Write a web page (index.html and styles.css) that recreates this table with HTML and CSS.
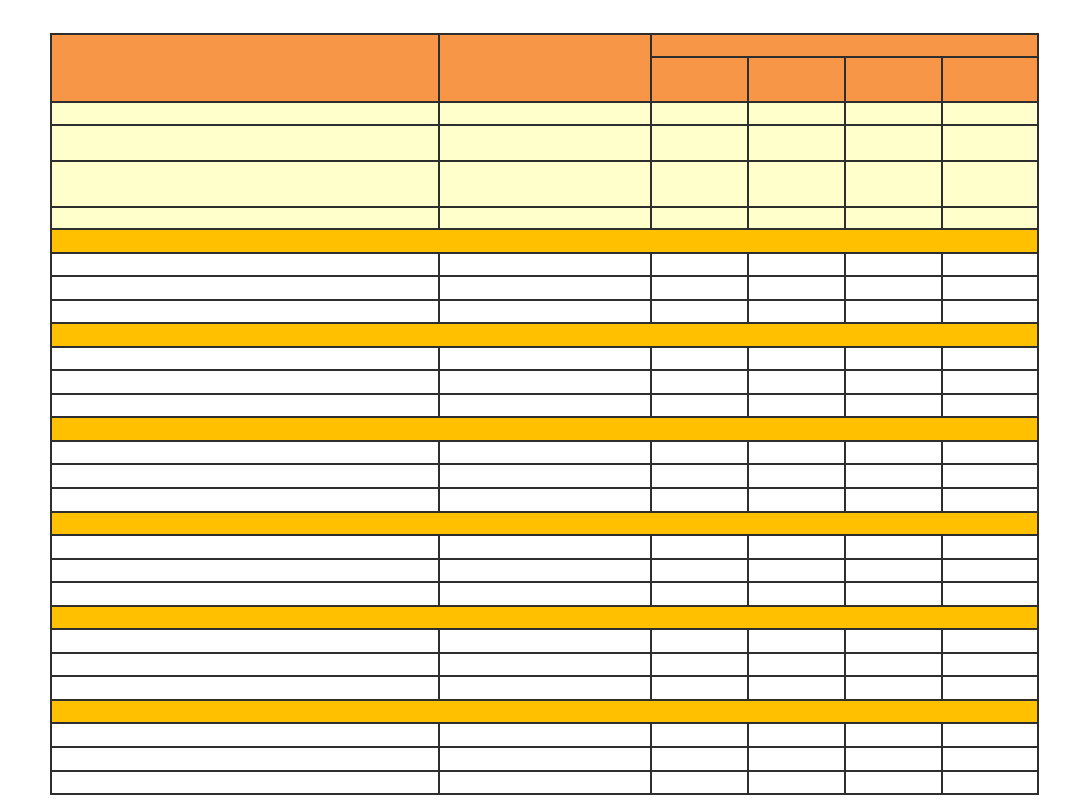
FILE: index.html
```html
<!DOCTYPE html>
<html>
<head>
<meta charset="utf-8">
<link rel="stylesheet" href="styles.css">
</head>
<body>
<div class="sheet">
  <div class="cell head span-rows"></div>
  <div class="cell head span-rows"></div>
  <div class="cell head span-cols4"></div>
  <div class="cell head"></div><div class="cell head"></div><div class="cell head"></div><div class="cell head"></div>

  <div class="cell lite"></div><div class="cell lite"></div><div class="cell lite"></div><div class="cell lite"></div><div class="cell lite"></div><div class="cell lite"></div>
  <div class="cell lite"></div><div class="cell lite"></div><div class="cell lite"></div><div class="cell lite"></div><div class="cell lite"></div><div class="cell lite"></div>
  <div class="cell lite"></div><div class="cell lite"></div><div class="cell lite"></div><div class="cell lite"></div><div class="cell lite"></div><div class="cell lite"></div>
  <div class="cell lite"></div><div class="cell lite"></div><div class="cell lite"></div><div class="cell lite"></div><div class="cell lite"></div><div class="cell lite"></div>

  <div class="cell section"></div>
  <div class="cell"></div><div class="cell"></div><div class="cell"></div><div class="cell"></div><div class="cell"></div><div class="cell"></div>
  <div class="cell"></div><div class="cell"></div><div class="cell"></div><div class="cell"></div><div class="cell"></div><div class="cell"></div>
  <div class="cell"></div><div class="cell"></div><div class="cell"></div><div class="cell"></div><div class="cell"></div><div class="cell"></div>

  <div class="cell section"></div>
  <div class="cell"></div><div class="cell"></div><div class="cell"></div><div class="cell"></div><div class="cell"></div><div class="cell"></div>
  <div class="cell"></div><div class="cell"></div><div class="cell"></div><div class="cell"></div><div class="cell"></div><div class="cell"></div>
  <div class="cell"></div><div class="cell"></div><div class="cell"></div><div class="cell"></div><div class="cell"></div><div class="cell"></div>

  <div class="cell section"></div>
  <div class="cell"></div><div class="cell"></div><div class="cell"></div><div class="cell"></div><div class="cell"></div><div class="cell"></div>
  <div class="cell"></div><div class="cell"></div><div class="cell"></div><div class="cell"></div><div class="cell"></div><div class="cell"></div>
  <div class="cell"></div><div class="cell"></div><div class="cell"></div><div class="cell"></div><div class="cell"></div><div class="cell"></div>

  <div class="cell section"></div>
  <div class="cell"></div><div class="cell"></div><div class="cell"></div><div class="cell"></div><div class="cell"></div><div class="cell"></div>
  <div class="cell"></div><div class="cell"></div><div class="cell"></div><div class="cell"></div><div class="cell"></div><div class="cell"></div>
  <div class="cell"></div><div class="cell"></div><div class="cell"></div><div class="cell"></div><div class="cell"></div><div class="cell"></div>

  <div class="cell section"></div>
  <div class="cell"></div><div class="cell"></div><div class="cell"></div><div class="cell"></div><div class="cell"></div><div class="cell"></div>
  <div class="cell"></div><div class="cell"></div><div class="cell"></div><div class="cell"></div><div class="cell"></div><div class="cell"></div>
  <div class="cell"></div><div class="cell"></div><div class="cell"></div><div class="cell"></div><div class="cell"></div><div class="cell"></div>

  <div class="cell section"></div>
  <div class="cell"></div><div class="cell"></div><div class="cell"></div><div class="cell"></div><div class="cell"></div><div class="cell"></div>
  <div class="cell"></div><div class="cell"></div><div class="cell"></div><div class="cell"></div><div class="cell"></div><div class="cell"></div>
  <div class="cell"></div><div class="cell"></div><div class="cell"></div><div class="cell"></div><div class="cell"></div><div class="cell"></div>
</div>
</body>
</html>
```
FILE: styles.css
```css
html, body {
  margin: 0;
  padding: 0;
  background: #ffffff;
  font-family: "Liberation Sans", Arial, sans-serif;
}

body {
  padding: 33px 0 0 50px;
}

.sheet {
  display: grid;
  width: max-content;
  background: #2e2e2e;
  border: 2px solid #2e2e2e;
  gap: 2px;
  grid-template-columns: 386px 210px 95px 95px 95px 94px;
  grid-template-rows:
    21px 43px
    21px 34px 44px 20px
    22px 21px 22px 21px
    22px 21px 22px 21px
    22px 21px 22px 22px
    21px 22px 21px 22px
    21px 22px 21px 22px
    21px 22px 22px 21px;
}

.cell {
  background: #ffffff;
}

.head {
  background: #f79646;
}

.span-rows {
  grid-row: span 2;
}

.span-cols4 {
  grid-column: span 4;
}

.lite {
  background: #ffffcc;
}

.section {
  background: #ffc000;
  grid-column: 1 / -1;
}
```
